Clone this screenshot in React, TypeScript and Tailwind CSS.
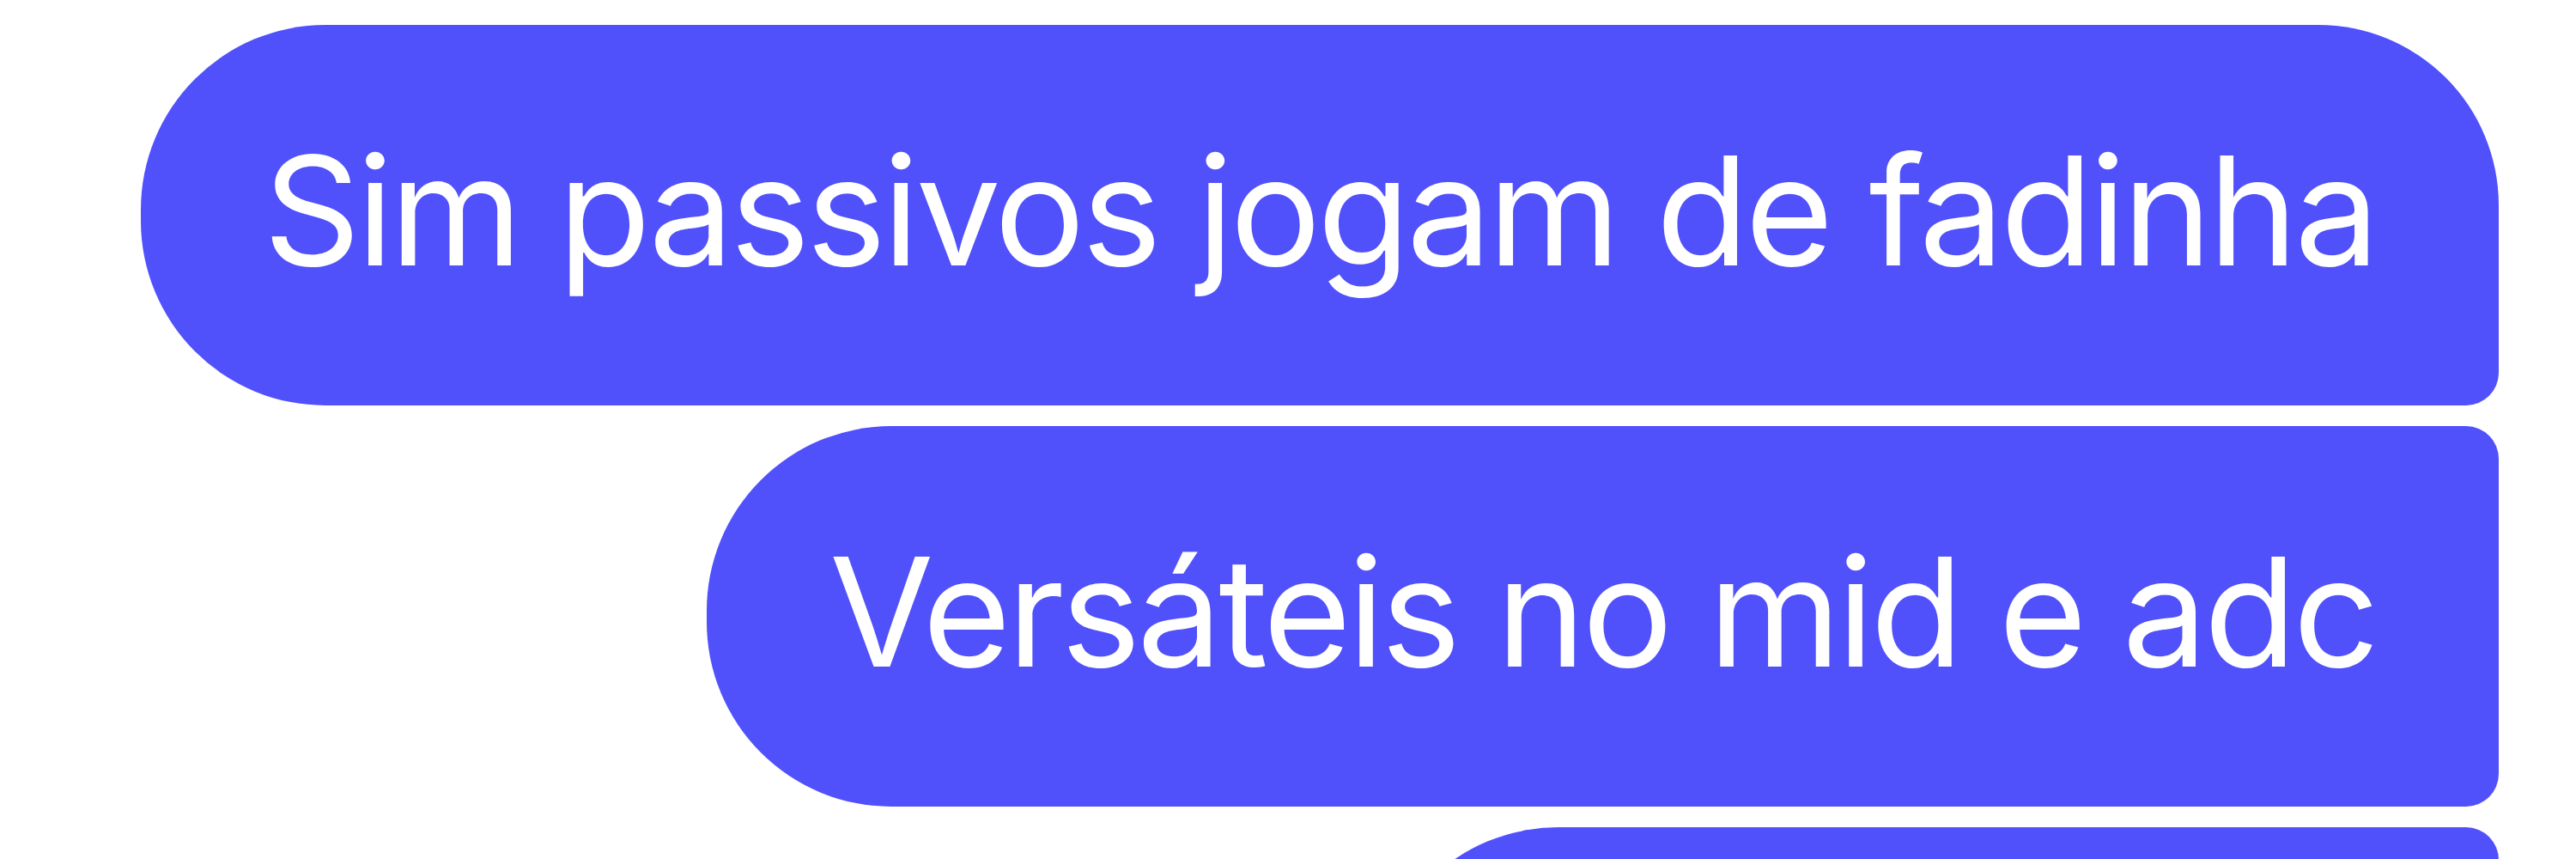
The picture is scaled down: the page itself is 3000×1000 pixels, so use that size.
import React from "react";

export default function App() {
  return (
    <div className="min-h-screen bg-white pt-[29px] pr-[90px] flex flex-col items-end gap-[24px] overflow-hidden">
      <div className="h-[443px] flex items-center px-[143px] pb-[12px] bg-[#5151fc] text-white rounded-l-[215px] rounded-tr-[210px] rounded-br-[38px]">
        <span className="text-[176px] leading-none font-['Inter',sans-serif] whitespace-nowrap tracking-[-4px]">
          Sim passivos jogam de fadinha
        </span>
      </div>
      <div className="h-[443px] flex items-center px-[143px] pb-[12px] bg-[#5151fc] text-white rounded-l-[215px] rounded-r-[38px]">
        <span className="text-[176px] leading-none font-['Inter',sans-serif] whitespace-nowrap tracking-[-4px]">
          Versáteis no mid e adc
        </span>
      </div>
      <div className="h-[443px] w-[1310px] bg-[#5151fc] rounded-l-[215px] rounded-tr-[38px]"></div>
    </div>
  );
}
